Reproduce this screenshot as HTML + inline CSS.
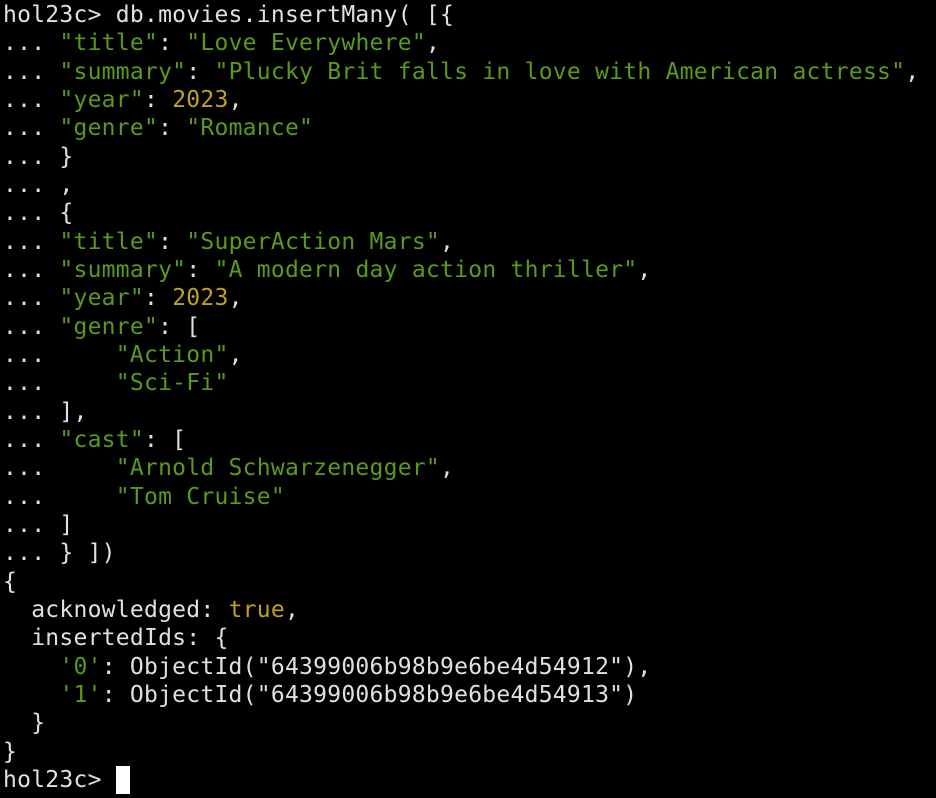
<!DOCTYPE html>
<html><head><style>
html,body{margin:0;padding:0;background:#000;width:936px;height:798px;overflow:hidden}
pre{margin:0;padding:1px 0 0 3px;font-family:"DejaVu Sans Mono","Liberation Mono",monospace;font-size:23px;letter-spacing:0.25px;line-height:28.33px;color:#e0e0e0;white-space:pre}
.g{color:#5a9a1a}.y{color:#c0a020}
.c{display:inline-block;width:14px;height:28px;background:#fff;vertical-align:top}
</style></head><body><pre>hol23c&gt; db.movies.insertMany( [{
... <span class="g">"title"</span>: <span class="g">"Love Everywhere"</span>,
... <span class="g">"summary"</span>: <span class="g">"Plucky Brit falls in love with American actress"</span>,
... <span class="g">"year"</span>: <span class="y">2023</span>,
... <span class="g">"genre"</span>: <span class="g">"Romance"</span>
... }
... ,
... {
... <span class="g">"title"</span>: <span class="g">"SuperAction Mars"</span>,
... <span class="g">"summary"</span>: <span class="g">"A modern day action thriller"</span>,
... <span class="g">"year"</span>: <span class="y">2023</span>,
... <span class="g">"genre"</span>: [
...     <span class="g">"Action"</span>,
...     <span class="g">"Sci-Fi"</span>
... ],
... <span class="g">"cast"</span>: [
...     <span class="g">"Arnold Schwarzenegger"</span>,
...     <span class="g">"Tom Cruise"</span>
... ]
... } ])
{
  acknowledged: <span class="y">true</span>,
  insertedIds: {
    <span class="g">'0'</span>: ObjectId("64399006b98b9e6be4d54912"),
    <span class="g">'1'</span>: ObjectId("64399006b98b9e6be4d54913")
  }
}
hol23c&gt; <span class="c"></span></pre></body></html>
